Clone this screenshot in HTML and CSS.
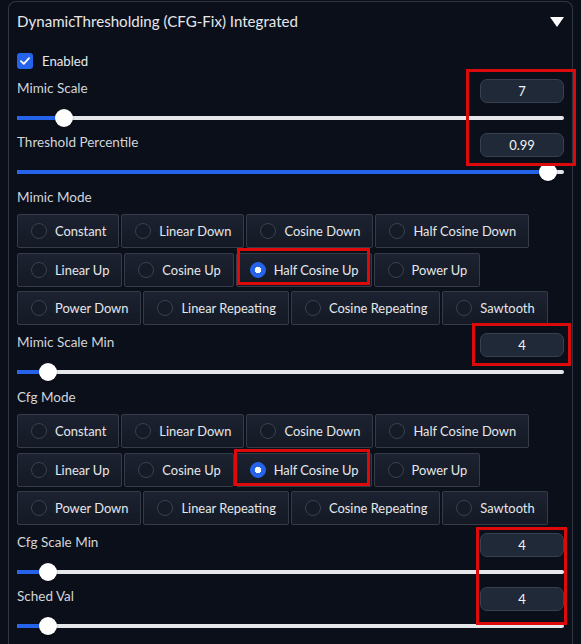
FILE: index.html
```html
<!DOCTYPE html>
<html lang="en">
<head>
    <meta charset="UTF-8">
    <meta name="viewport" content="width=device-width, initial-scale=1.0">
    <title>DynamicThresholding (CFG-Fix)</title>
    <link rel="stylesheet" href="styles.css">
</head>
<body>
<div class="page">
    <div class="accordion">
        <div class="acc-head">
            <span class="acc-title">DynamicThresholding (CFG-Fix) Integrated</span>
            <svg class="caret" width="14" height="10" viewBox="0 0 14 10"><polygon points="0,0 14,0 7,10" fill="#fff"/></svg>
        </div>

        <div class="acc-body">
            <label class="check">
                <span class="check-box">
                    <svg width="10" height="8" viewBox="0 0 10 8"><path d="M1 4.2 L3.8 6.8 L9 1.2" fill="none" stroke="#fff" stroke-width="1.8" stroke-linecap="round" stroke-linejoin="round"/></svg>
                </span>
                Enabled
            </label>

            <!-- Mimic Scale -->
            <div class="slider">
                <div class="slider-head">
                    <span class="label">Mimic Scale</span>
                    <div class="num">7</div>
                </div>
                <div class="track">
                    <div class="fill" style="width: 8.6%"></div>
                    <div class="thumb" style="left: 8.6%"></div>
                </div>
            </div>

            <!-- Threshold Percentile -->
            <div class="slider">
                <div class="slider-head">
                    <span class="label">Threshold Percentile</span>
                    <div class="num">0.99</div>
                </div>
                <div class="track">
                    <div class="fill" style="width: 97.1%"></div>
                    <div class="thumb" style="left: 97.1%"></div>
                </div>
            </div>

            <!-- Mimic Mode -->
            <div class="radio-group">
                <span class="label">Mimic Mode</span>
                <div class="options">
                    <div class="option"><span class="dot"></span>Constant</div>
                    <div class="option"><span class="dot"></span>Linear Down</div>
                    <div class="option"><span class="dot"></span>Cosine Down</div>
                    <div class="option"><span class="dot"></span>Half Cosine Down</div>
                    <div class="option"><span class="dot"></span>Linear Up</div>
                    <div class="option"><span class="dot"></span>Cosine Up</div>
                    <div class="option selected"><span class="dot"></span>Half Cosine Up</div>
                    <div class="option"><span class="dot"></span>Power Up</div>
                    <div class="option"><span class="dot"></span>Power Down</div>
                    <div class="option"><span class="dot"></span>Linear Repeating</div>
                    <div class="option"><span class="dot"></span>Cosine Repeating</div>
                    <div class="option"><span class="dot"></span>Sawtooth</div>
                </div>
            </div>

            <!-- Mimic Scale Min -->
            <div class="slider">
                <div class="slider-head">
                    <span class="label">Mimic Scale Min</span>
                    <div class="num">4</div>
                </div>
                <div class="track">
                    <div class="fill" style="width: 5.7%"></div>
                    <div class="thumb" style="left: 5.7%"></div>
                </div>
            </div>

            <!-- Cfg Mode -->
            <div class="radio-group">
                <span class="label">Cfg Mode</span>
                <div class="options">
                    <div class="option"><span class="dot"></span>Constant</div>
                    <div class="option"><span class="dot"></span>Linear Down</div>
                    <div class="option"><span class="dot"></span>Cosine Down</div>
                    <div class="option"><span class="dot"></span>Half Cosine Down</div>
                    <div class="option"><span class="dot"></span>Linear Up</div>
                    <div class="option"><span class="dot"></span>Cosine Up</div>
                    <div class="option selected"><span class="dot"></span>Half Cosine Up</div>
                    <div class="option"><span class="dot"></span>Power Up</div>
                    <div class="option"><span class="dot"></span>Power Down</div>
                    <div class="option"><span class="dot"></span>Linear Repeating</div>
                    <div class="option"><span class="dot"></span>Cosine Repeating</div>
                    <div class="option"><span class="dot"></span>Sawtooth</div>
                </div>
            </div>

            <!-- Cfg Scale Min -->
            <div class="slider">
                <div class="slider-head">
                    <span class="label">Cfg Scale Min</span>
                    <div class="num">4</div>
                </div>
                <div class="track">
                    <div class="fill" style="width: 5.7%"></div>
                    <div class="thumb" style="left: 5.7%"></div>
                </div>
            </div>

            <!-- Sched Val -->
            <div class="slider">
                <div class="slider-head">
                    <span class="label">Sched Val</span>
                    <div class="num">4</div>
                </div>
                <div class="track">
                    <div class="fill" style="width: 5.7%"></div>
                    <div class="thumb" style="left: 5.7%"></div>
                </div>
            </div>
        </div>
    </div>

    <!-- red annotation boxes -->
    <div class="mark mark-top"></div>
    <div class="mark mark-mimic-mode"></div>
    <div class="mark mark-mimic-min"></div>
    <div class="mark mark-cfg-mode"></div>
    <div class="mark mark-bottom"></div>
</div>
</body>
</html>
```

FILE: styles.css
```css
body {
    margin: 0;
    background: #0b0f19;
    color: #e5e7eb;
    font-family: "Lato", "Noto Sans", sans-serif;
    overflow: hidden;
}

.page {
    position: relative;
    padding: 1px 8px 0;
    height: 643px;
}

.accordion {
    border: 1px solid #30363f;
    border-bottom: none;
    border-radius: 8px 8px 0 0;
    background: #0b0f19;
    min-height: 700px;
}

.acc-head {
    display: flex;
    justify-content: space-between;
    align-items: center;
    padding: 9px 8px 22px;
}

.acc-title {
    font-size: 15.1px;
    line-height: 20px;
    color: #e5e7eb;
}

.caret {
    display: block;
    margin-top: 2px;
}

.acc-body {
    padding: 0 8px;
}

.check {
    display: flex;
    align-items: center;
    gap: 9px;
    height: 16px;
    margin-bottom: 10px;
    font-size: 13.2px;
    color: #e5e7eb;
}

.check-box {
    width: 16px;
    height: 16px;
    border-radius: 3px;
    background: #2563eb;
    display: flex;
    align-items: center;
    justify-content: center;
}

.label {
    display: block;
    font-size: 13.5px;
    line-height: 18px;
    color: #d1d5db;
}

/* sliders */
.slider {
    padding-bottom: 13px;
}

.slider-head {
    display: flex;
    justify-content: space-between;
    align-items: flex-start;
    height: 24px;
    margin-bottom: 13px;
}

.num {
    box-sizing: border-box;
    width: 84px;
    height: 24px;
    border: 1px solid #374151;
    border-radius: 7px;
    background: #1f2937;
    color: #f3f4f6;
    font-size: 13px;
    line-height: 22px;
    text-align: center;
}

.track {
    position: relative;
    height: 4px;
    border-radius: 2px;
    background: #e5e7eb;
}

.fill {
    height: 4px;
    border-radius: 2px;
    background: #2563eb;
}

.thumb {
    position: absolute;
    top: 50%;
    width: 18px;
    height: 18px;
    border-radius: 50%;
    background: #fff;
    transform: translate(-50%, -50%);
    box-shadow: 0 1px 2px rgba(0, 0, 0, 0.4);
}

/* radio groups */
.radio-group {
    padding-top: 1px;
    padding-bottom: 8px;
}

.radio-group .label {
    margin-bottom: 8px;
}

.options {
    display: flex;
    flex-wrap: wrap;
    gap: 4.5px 2px;
}

.option {
    box-sizing: border-box;
    display: flex;
    align-items: center;
    gap: 8px;
    height: 34px;
    padding: 0 12px 0 13px;
    border: 1px solid #353c49;
    border-radius: 2px;
    background: linear-gradient(180deg, #1c2230, #141925);
    font-size: 12.9px;
    color: #e5e7eb;
}

.dot {
    box-sizing: border-box;
    width: 16px;
    height: 16px;
    border-radius: 50%;
    border: 1px solid #3a4150;
    background: #151b27;
    flex-shrink: 0;
}

.option.selected .dot {
    border-color: #2563eb;
    background: #2563eb radial-gradient(circle, #fff 0 3px, transparent 3.5px);
}

/* annotations drawn over the screenshot */
.mark {
    position: absolute;
    box-sizing: border-box;
    border: 3px solid #dc0a0a;
}

.mark-top {
    left: 466px;
    top: 69px;
    width: 110px;
    height: 97px;
}

.mark-mimic-mode {
    left: 237px;
    top: 248px;
    width: 133px;
    height: 37px;
}

.mark-mimic-min {
    left: 472px;
    top: 323px;
    width: 99px;
    height: 43px;
}

.mark-cfg-mode {
    left: 234px;
    top: 449px;
    width: 136px;
    height: 37px;
}

.mark-bottom {
    left: 476px;
    top: 527px;
    width: 91px;
    height: 98px;
}
```
